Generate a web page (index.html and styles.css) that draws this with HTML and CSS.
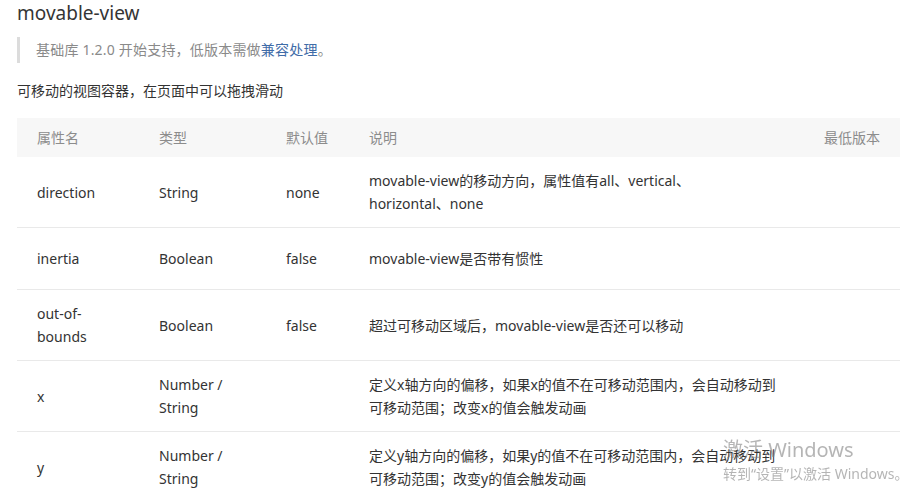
FILE: index.html
```html
<!DOCTYPE html>
<html lang="zh-CN">
<head>
<meta charset="utf-8">
<title>movable-view</title>
<link rel="stylesheet" href="styles.css">
</head>
<body>
<div class="page">
  <h1 class="title">movable-view</h1>
  <blockquote class="note">基础库 1.2.0 开始支持，低版本需做<a class="link" href="#">兼容处理</a>。</blockquote>
  <p class="desc">可移动的视图容器，在页面中可以拖拽滑动</p>
  <table class="props">
    <colgroup>
      <col class="c1"><col class="c2"><col class="c3"><col class="c4"><col class="c5">
    </colgroup>
    <thead>
      <tr><th>属性名</th><th>类型</th><th>默认值</th><th>说明</th><th>最低版本</th></tr>
    </thead>
    <tbody>
      <tr><td>direction</td><td>String</td><td>none</td><td>movable-view的移动方向，属性值有all、vertical、<span class="keep">horizontal、none</span></td><td></td></tr>
      <tr><td>inertia</td><td>Boolean</td><td>false</td><td>movable-view是否带有惯性</td><td></td></tr>
      <tr><td>out-of-bounds</td><td>Boolean</td><td>false</td><td>超过可移动区域后，movable-view是否还可以移动</td><td></td></tr>
      <tr><td>x</td><td>Number / String</td><td></td><td>定义x轴方向的偏移，如果x的值不在可移动范围内，会自动移动到可移动范围；改变x的值会触发动画</td><td></td></tr>
      <tr><td>y</td><td>Number / String</td><td></td><td>定义y轴方向的偏移，如果y的值不在可移动范围内，会自动移动到可移动范围；改变y的值会触发动画</td><td></td></tr>
    </tbody>
  </table>
</div>
<div class="activate">
  <div class="act-title">激活 Windows</div>
  <div class="act-sub">转到“设置”以激活 Windows。</div>
</div>
</body>
</html>
```
FILE: styles.css
```css
html, body {
  margin: 0;
  padding: 0;
  background: #fff;
}
body {
  font-family: "Noto Sans", "Noto Sans CJK SC", sans-serif;
  color: #333;
  font-size: 14px;
  overflow: hidden;
}
.page {
  padding: 0 15px 0 17px;
}
.title {
  margin: 0;
  font-size: 19px;
  font-weight: normal;
  line-height: 26px;
  color: #353535;
}
.note {
  margin: 11px 0 0 0;
  border-left: 3px solid #dcdcdc;
  padding: 0 0 0 16px;
  line-height: 26px;
  font-size: 14px;
  letter-spacing: 0.2px;
  color: #8a8a8a;
}
.link {
  color: #3f6ca8;
  text-decoration: none;
}
.desc {
  margin: 17px 0 0 0;
  line-height: 22px;
  font-size: 14px;
  color: #333;
}
.props {
  margin-top: 16px;
  width: 883px;
  border-collapse: collapse;
  table-layout: fixed;
}
.c1 { width: 122px; }
.c2 { width: 127px; }
.c3 { width: 83px; }
.c4 { width: 455px; }
.c5 { width: 96px; }
.props th {
  background: #f7f7f7;
  color: #8c8c8c;
  font-weight: normal;
  text-align: left;
  height: 39px;
  padding: 0 20px;
  line-height: 23px;
}
.props td {
  padding: 12px 20px;
  line-height: 23px;
  border-bottom: 1px solid #e9e9e9;
  vertical-align: middle;
  word-wrap: break-word;
}
.props tbody tr {
  height: 62px;
}
.keep {
  white-space: nowrap;
}
.activate {
  position: fixed;
  left: 723px;
  top: 436px;
  color: rgba(120, 120, 120, 0.55);
  white-space: nowrap;
  pointer-events: none;
}
.act-title {
  font-size: 20px;
  line-height: 28px;
}
.act-sub {
  font-size: 14px;
  line-height: 20px;
}
```
